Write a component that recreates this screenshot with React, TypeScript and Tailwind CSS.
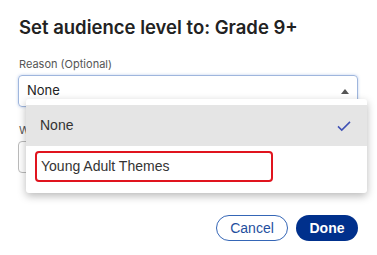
import React from "react";

function CheckIcon() {
  return (
    <svg viewBox="0 0 24 24" className="w-[18px] h-[18px] text-[#3f51b5]" fill="none" stroke="currentColor" strokeWidth="2" aria-hidden>
      <path d="M4 12.5l5 5L20 6.5" />
    </svg>
  );
}

export default function App() {
  return (
    <div className="relative w-[377px] h-[255px] bg-white overflow-hidden font-['Inter',sans-serif]">
      <div className="px-[18px] pt-[16px]">
        <h1 className="text-[18.5px] leading-[22px] font-semibold text-[#222] pl-px">
          Set audience level to: Grade 9+
        </h1>

        <div className="mt-[19px] text-[11px] leading-[14px] text-[#555] pl-px">Reason (Optional)</div>
        <div className="mt-[4px] h-[32px] w-[340px] rounded-[4px] border border-[#9fb6dd] shadow-[0_0_3px_rgba(60,110,200,0.35)] flex items-center justify-between pl-[8px] pr-[8px]">
          <span className="text-[13px] text-[#222]">None</span>
          <svg viewBox="0 0 10 6" className="w-[8px] h-[5px] text-[#555]" fill="currentColor" aria-hidden>
            <path d="M0 6L5 0l5 6z" />
          </svg>
        </div>

        <div className="mt-[16px] text-[11px] leading-[14px] text-[#555] pl-px">Why</div>
        <div className="mt-[4px] h-[32px] w-[340px] rounded-[4px] border border-[#bbb]" />

        <div className="mt-[42px] flex justify-end gap-[8px] pr-[1px] font-['Liberation_Sans',Arial,sans-serif]">
          <button className="h-[26px] w-[72px] rounded-full border border-[#3566b6] text-[#1f4f9e] text-[14px]">
            Cancel
          </button>
          <button className="h-[26px] w-[62px] rounded-full bg-[#00308c] text-white text-[14px] font-bold">
            Done
          </button>
        </div>
      </div>

      <div className="absolute left-[26px] top-[99px] w-[341px] bg-white rounded-[3px] shadow-[0_3px_8px_rgba(0,0,0,0.28)] py-[6px] font-['Liberation_Sans',Arial,sans-serif]">
        <div className="h-[41px] bg-[#e5e5e5] flex items-center justify-between pl-[14px] pr-[14px]">
          <span className="text-[14px] text-[#333]">None</span>
          <CheckIcon />
        </div>
        <div className="h-[41px] flex items-center pl-[9px]">
          <div className="h-[31px] w-[238px] rounded-[4px] border-2 border-[#e0141e] flex items-center pl-[4px]">
            <span className="text-[14px] text-[#333]">Young Adult Themes</span>
          </div>
        </div>
      </div>
    </div>
  );
}
